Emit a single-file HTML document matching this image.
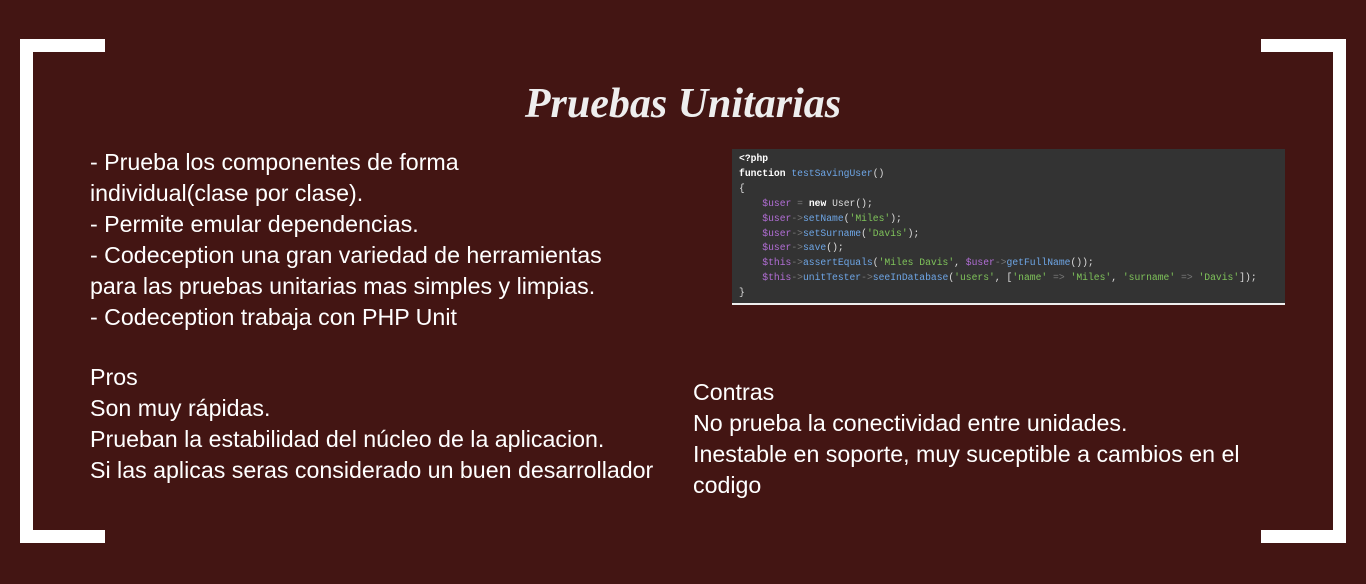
<!DOCTYPE html>
<html><head><meta charset="utf-8"><style>
html,body{margin:0;padding:0}
body{width:1366px;height:584px;background:#431513;position:relative;overflow:hidden;font-family:"Liberation Sans",sans-serif;color:#fff}
.b{position:absolute;background:#fff}
h1{position:absolute;left:0;width:1366px;top:80px;margin:0;text-align:center;font:italic bold 42px "Liberation Serif",serif;color:#eee}
.t{position:absolute;font-size:23.2px;line-height:31px;white-space:pre;color:#fff}
.code{position:absolute;left:732px;top:149px;width:553px;height:154px;background:#333;border-bottom:2px solid #eee;box-sizing:content-box}
.code pre{margin:0;position:absolute;left:7px;top:3px;font:9.7px/14.9px "Liberation Mono",monospace;color:#ddd}
.k{color:#fff;font-weight:bold}.v{color:#b26ed6}.f{color:#6ea6e6}.s{color:#7fc35a}.o{color:#777}
</style></head><body>
<div class="b" style="left:20px;top:39px;width:13px;height:504px"></div>
<div class="b" style="left:20px;top:39px;width:85px;height:13px"></div>
<div class="b" style="left:20px;top:530px;width:85px;height:13px"></div>
<div class="b" style="left:1333px;top:39px;width:13px;height:504px"></div>
<div class="b" style="left:1261px;top:39px;width:85px;height:13px"></div>
<div class="b" style="left:1261px;top:530px;width:85px;height:13px"></div>
<h1>Pruebas Unitarias</h1>
<div class="t" style="left:90px;top:147px">- Prueba los componentes de forma
individual(clase por clase).
- Permite emular dependencias.
- Codeception una gran variedad de herramientas
para las pruebas unitarias mas simples y limpias.
- Codeception trabaja con PHP Unit</div>
<div class="t" style="left:90px;top:362px">Pros
Son muy rápidas.
Prueban la estabilidad del núcleo de la aplicacion.
Si las aplicas seras considerado un buen desarrollador</div>
<div class="t" style="left:693px;top:377px">Contras
No prueba la conectividad entre unidades.
Inestable en soporte, muy suceptible a cambios en el
codigo</div>
<div class="code"><pre><span class="k">&lt;?php</span>
<span class="k">function</span> <span class="f">testSavingUser</span>()
{
    <span class="v">$user</span> <span class="o">=</span> <span class="k">new</span> User();
    <span class="v">$user</span><span class="o">-&gt;</span><span class="f">setName</span>(<span class="s">'Miles'</span>);
    <span class="v">$user</span><span class="o">-&gt;</span><span class="f">setSurname</span>(<span class="s">'Davis'</span>);
    <span class="v">$user</span><span class="o">-&gt;</span><span class="f">save</span>();
    <span class="v">$this</span><span class="o">-&gt;</span><span class="f">assertEquals</span>(<span class="s">'Miles Davis'</span>, <span class="v">$user</span><span class="o">-&gt;</span><span class="f">getFullName</span>());
    <span class="v">$this</span><span class="o">-&gt;</span><span class="f">unitTester</span><span class="o">-&gt;</span><span class="f">seeInDatabase</span>(<span class="s">'users'</span>, [<span class="s">'name'</span> <span class="o">=&gt;</span> <span class="s">'Miles'</span>, <span class="s">'surname'</span> <span class="o">=&gt;</span> <span class="s">'Davis'</span>]);
}</pre></div>
</body></html>
